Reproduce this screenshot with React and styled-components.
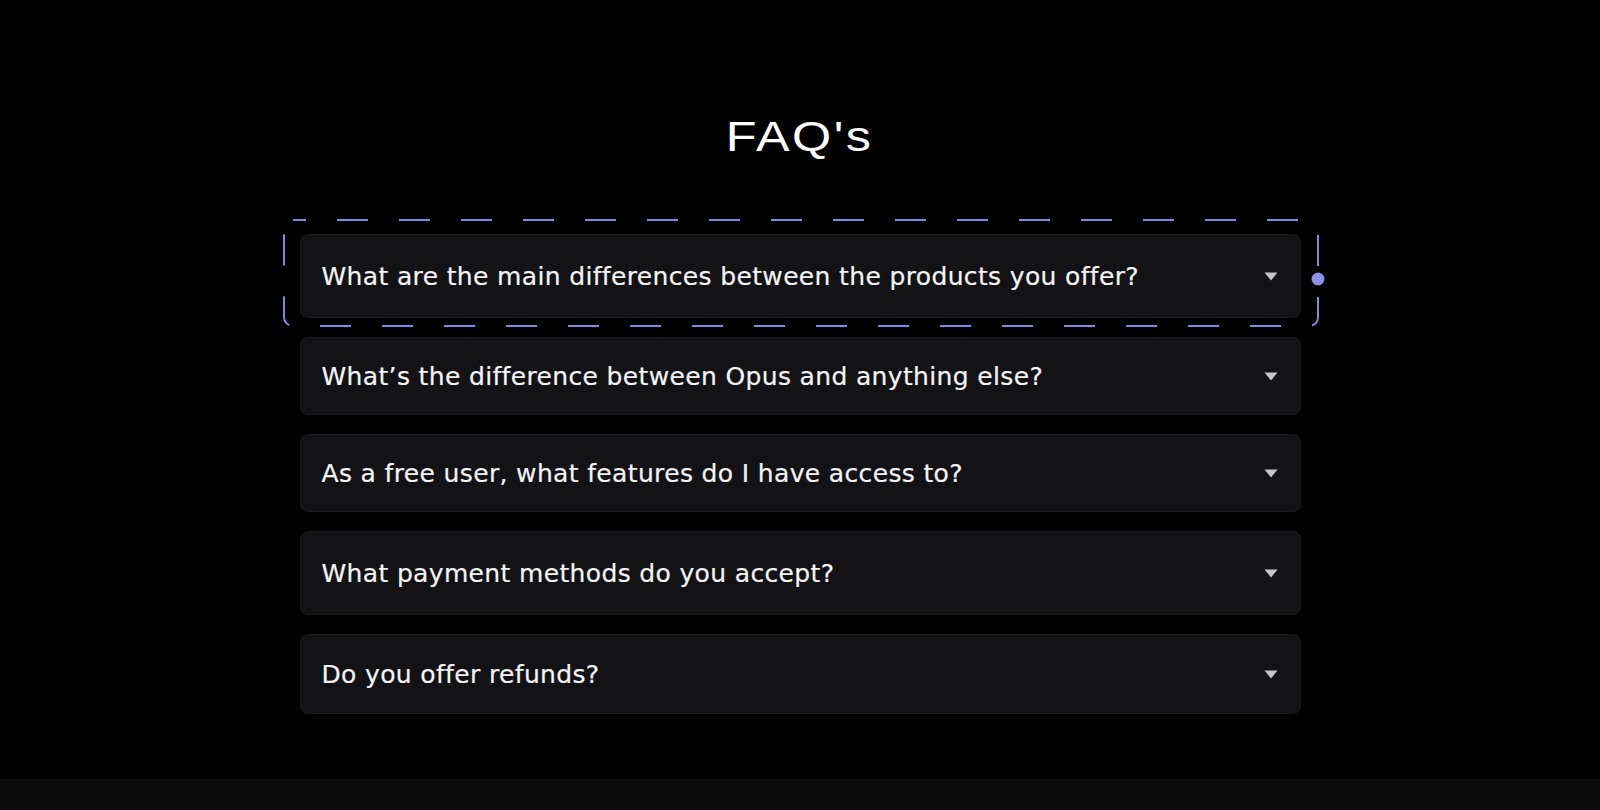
import styled, { createGlobalStyle } from 'styled-components'

const GlobalStyle = createGlobalStyle`
  html, body {
    margin: 0;
    padding: 0;
    background: #000;
  }
  body {
    font-family: "DejaVu Sans", "Liberation Sans", sans-serif;
    color: #f4f4f5;
  }
`

const faqs = [
  { q: 'What are the main differences between the products you offer?', h: 84, selected: true },
  { q: 'What’s the difference between Opus and anything else?', h: 78 },
  { q: 'As a free user, what features do I have access to?', h: 78 },
  { q: 'What payment methods do you accept?', h: 84 },
  { q: 'Do you offer refunds?', h: 80 }
]

const Page = styled.div`
  height: 810px;
  display: flex;
  flex-direction: column;
  overflow: hidden;
`
const Section = styled.section`
  flex: 1;
  padding-top: 110px;
`
const Title = styled.h2`
  width: fit-content;
  margin: 0 auto 70px;
  font-family: "Liberation Sans", Arial, sans-serif;
  font-weight: 400;
  font-size: 42px;
  line-height: 54px;
  letter-spacing: 2px;
  color: #fff;
  transform: scaleX(1.2);
`
const List = styled.div`
  width: 1001px;
  margin: 0 auto;
  display: flex;
  flex-direction: column;
  gap: 19px;
`
const Item = styled.div`
  position: relative;
  height: ${({ h }) => h}px;
  box-sizing: border-box;
  display: flex;
  align-items: center;
  justify-content: space-between;
  padding: 0 22px 0 21px;
  background: #131316;
  border: 1px solid #1c1c20;
  border-radius: 8px;
  cursor: pointer;
`
const Question = styled.span`
  font-size: 25px;
  letter-spacing: 0.35px;
  color: #f4f4f5;
  -webkit-text-stroke: 0.2px #f4f4f5;
`
const Caret = styled.svg`
  width: 14px;
  height: 9px;
  flex-shrink: 0;
`
const Selection = styled.svg`
  position: absolute;
  left: -18px;
  top: -16px;
  width: 1036px;
  height: 108px;
  overflow: visible;
  pointer-events: none;
`
const Footer = styled.div`
  height: 31px;
  background: #0b0b0b;
`

const SelectionBox = () => (
  <Selection viewBox="0 0 1036 108">
    <rect
      x="1" y="1" width="1034" height="106" rx="9"
      fill="none" stroke="#8188e4" strokeWidth="2"
      strokeDasharray="31 31" strokeDashoffset="-44"
    />
    <circle cx="1035" cy="60" r="6.5" fill="#8a90ea" />
  </Selection>
)

export default function App() {
  return (
    <Page>
      <GlobalStyle />
      <Section>
        <Title>FAQ's</Title>
        <List>
          {faqs.map(f => (
            <Item key={f.q} h={f.h}>
              {f.selected && <SelectionBox />}
              <Question>{f.q}</Question>
              <Caret viewBox="0 0 14 9">
                <path d="M0.5 0.5 L13.5 0.5 L7 8.5 Z" fill="#c6c6ca" />
              </Caret>
            </Item>
          ))}
        </List>
      </Section>
      <Footer />
    </Page>
  )
}
